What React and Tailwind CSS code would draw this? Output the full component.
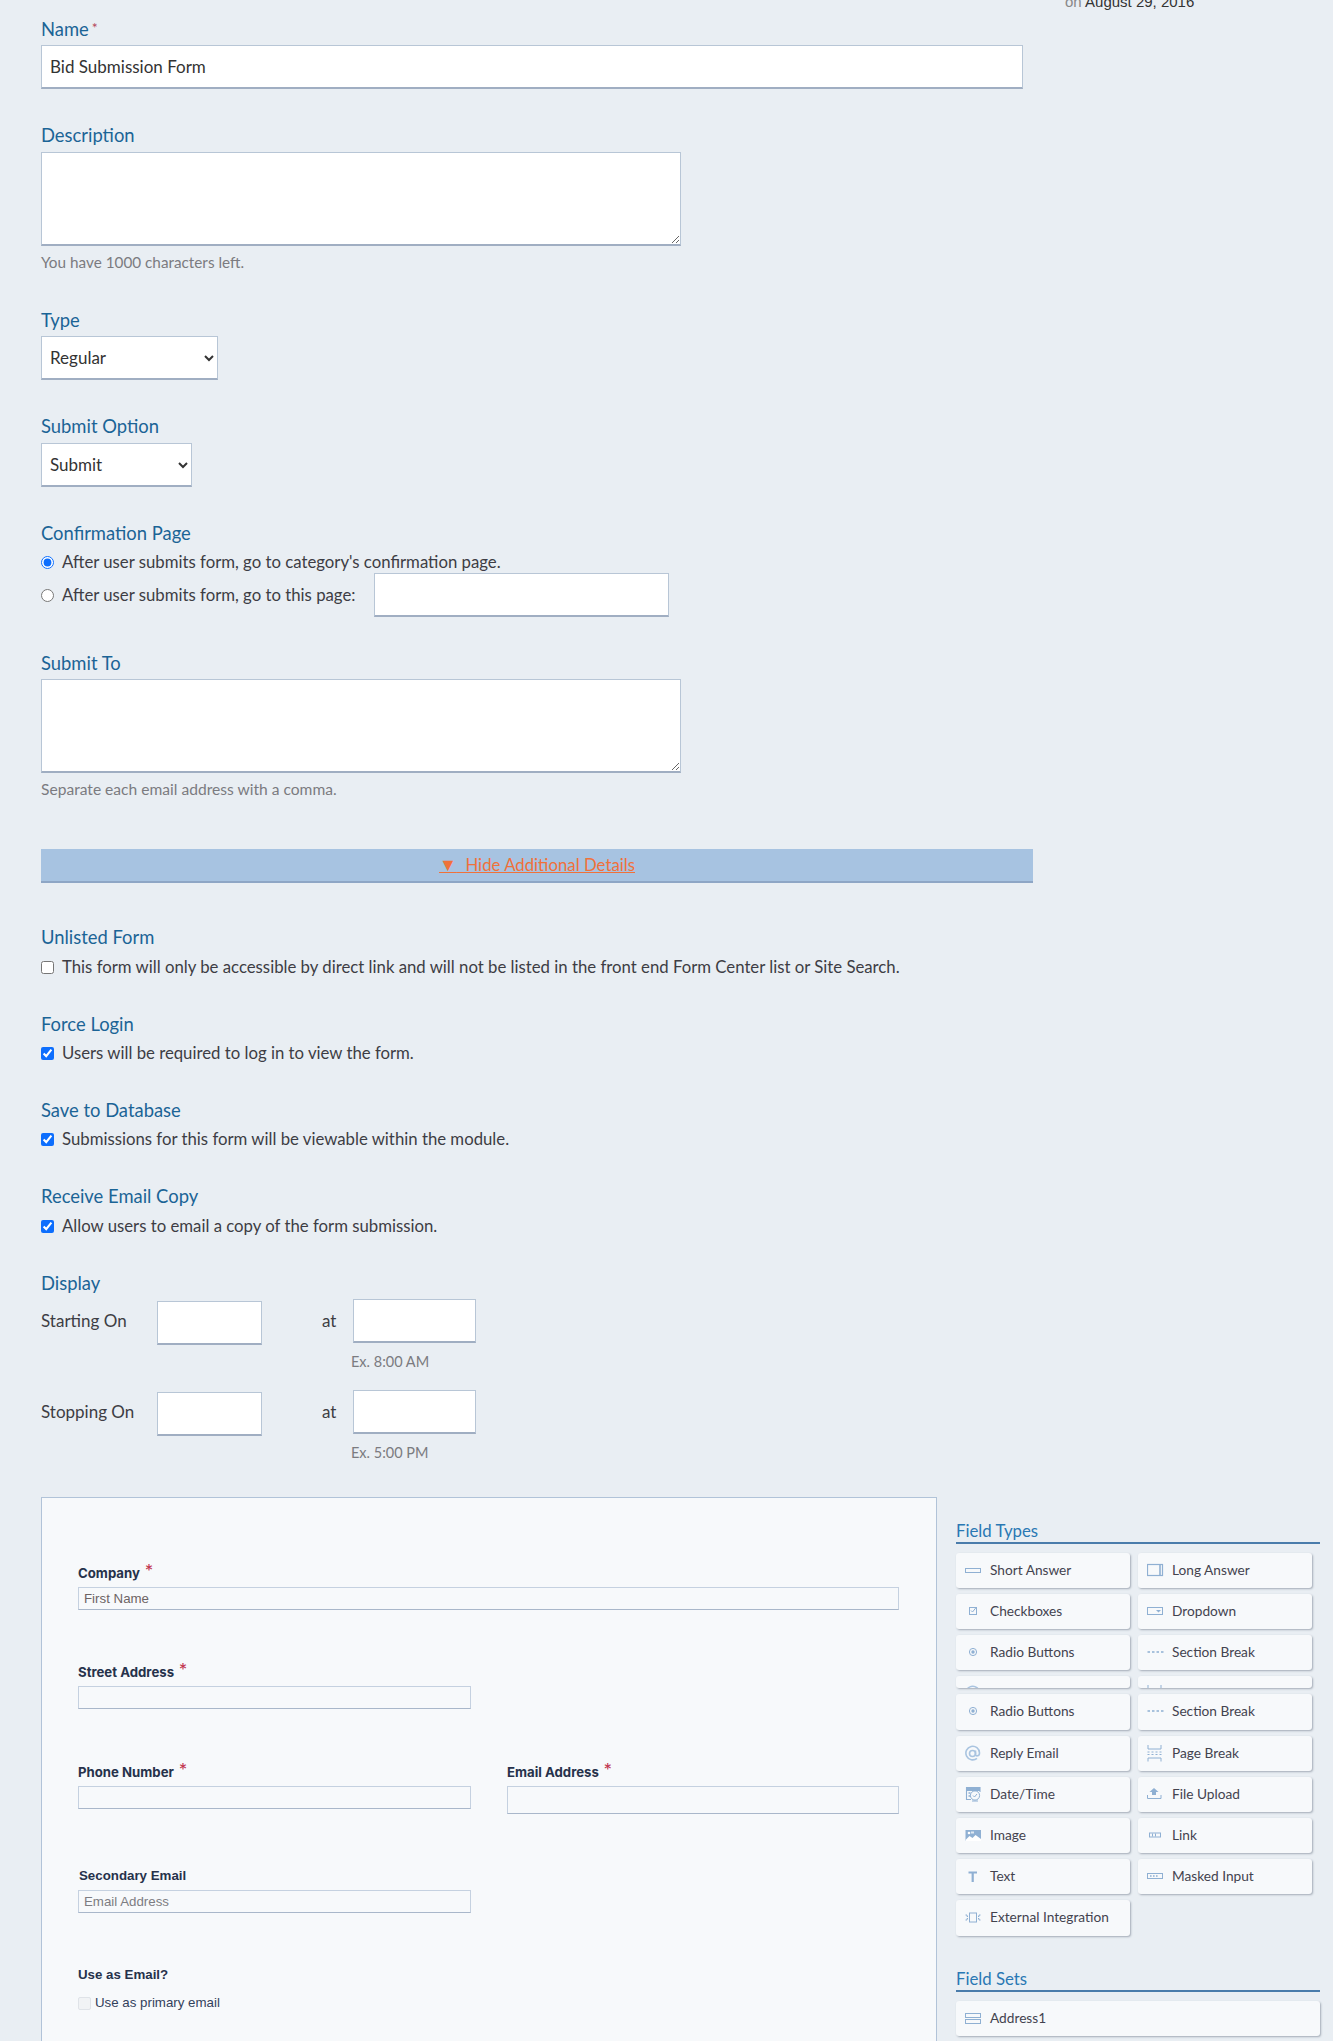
import React from "react";

const BODY = "font-['Lato','Noto_Sans',sans-serif]";
const ICON = "#8fb0d3";

function Label({ children, className = "" }) {
  return <div className={`h-6 text-[18.4px] leading-6 text-[#1b6496] ${className}`}>{children}</div>;
}
const inputCls = "block h-11 bg-white border border-[#b8c6d6] border-b-[#a0aec2] border-b-2 rounded-none";

function Help({ children, className = "" }) {
  return <div className={`text-[15.3px] leading-5 text-[#7b7b80] ${className}`}>{children}</div>;
}

function Check({ children, checked }) {
  return (
    <label className="flex h-6 items-center text-[#3d3d44] text-[16.75px]">
      <input type="checkbox" readOnly checked={checked} className="w-[13px] h-[13px] m-0 mr-[8px] accent-[#0d6efd]" />
      <span>{children}</span>
    </label>
  );
}

function Sel({ w, value }) {
  return (
    <select defaultValue={value} className={`${inputCls} px-[4px] text-[17px] text-[#333] ${w}`}>
      <option>{value}</option>
    </select>
  );
}

const S = { width: 24, height: 24, viewBox: "0 0 24 24", fill: "none", stroke: ICON, strokeWidth: 1 };

const icons = {
  short: <svg {...S}><rect x="0.5" y="9.5" width="15" height="4" /></svg>,
  long: <svg {...S}><rect x="0.5" y="5.5" width="15" height="11" strokeWidth="1.2" /><path d="M13 5.5v11" strokeWidth="1.6" /></svg>,
  check: <svg {...S}><rect x="4.5" y="7.5" width="7" height="7" /><path d="M6 10.5l1.5 1.5L11.5 7" /></svg>,
  drop: <svg {...S}><rect x="0.5" y="7.5" width="15" height="7" /><path d="M9 10h5l-2.5 2.5z" fill={ICON} stroke="none" /></svg>,
  radio: <svg {...S}><circle cx="8" cy="11" r="3.6" /><circle cx="8" cy="11" r="1.7" fill={ICON} stroke="none" /></svg>,
  section: <svg {...S}><path d="M0.5 11h16" strokeWidth="1.4" strokeDasharray="2.5 2" /></svg>,
  at: <svg {...S} stroke="#a9c4e0"><circle cx="7.5" cy="11.5" r="3" strokeWidth="1.6" /><path d="M10.5 8.5v4c0 2 4 2 4-1.5a6.8 6.8 0 1 0-2.5 5.3" strokeWidth="1.6" /></svg>,
  page: <svg {...S}><path d="M1 3v4h13V3M1 19.5v-3.5h13v3.5" /><path d="M0.5 10h14.5M0.5 12.5h14.5" strokeDasharray="2 2" /></svg>,
  date: <svg {...S}><path d="M15 9V4.5H1.5v12H6" strokeWidth="1.1" /><path d="M1.5 6.5h13.5" strokeWidth="3" /><circle cx="10" cy="12.5" r="4.6" /><path d="M8 12.5l1.5 1.5 2.5-3M7 18h6" /><path d="M3.5 10h2M3.5 13h2" strokeWidth="1.4" /></svg>,
  upload: <svg {...S}><path d="M7 5l4.5 4H9v3H5V9H2.5z" fill={ICON} stroke="none" /><path d="M0.5 12v3.5h13.5V12" /></svg>,
  image: <svg {...S}><rect x="0.5" y="6" width="15.5" height="11" fill={ICON} stroke="none" /><path d="M0.5 16l4-4 3 2 3-3 5.5 4v2H.5z" fill="#ffffff" stroke="none" /><circle cx="4" cy="9" r="1.3" fill="#ffffff" stroke="none" /><rect x="6" y="7.5" width="3" height="2" fill="#dfe8f2" stroke="none" /></svg>,
  link: <svg {...S}><rect x="2.5" y="9" width="11" height="4" /><path d="M5.5 9.5v3M8.5 9.5v3" /></svg>,
  text: <svg {...S}><path d="M3.5 7.5h8.5M7.7 7.5V17" strokeWidth="2.2" /></svg>,
  masked: <svg {...S}><rect x="0.5" y="8.5" width="15" height="5" /><path d="M3 11h1.6M6 11h1.6M9 11h1.6" strokeWidth="1.6" /></svg>,
  ext: <svg {...S}><rect x="4.5" y="7" width="7" height="9" /><path d="M0.5 9h1.5v1.5h1M0.5 14h1.5v-1.5h1M15.5 9H14v1.5h-1M15.5 14H14v-1.5h-1" /></svg>,
  set: <svg {...S}><rect x="0.5" y="6.5" width="15" height="4" /><rect x="0.5" y="12.5" width="15" height="4" /></svg>,
};

function Card({ icon, label, clip, tall, wide }) {
  return (
    <div className={`flex items-start ${wide ? "w-[364px]" : "w-[174px]"} ${clip ? "h-3 overflow-hidden" : tall ? "h-9" : "h-[35px]"} bg-[#f7f9fb] rounded-[3px] shadow-[1px_1px_2px_rgba(80,90,110,0.45)] pl-[9px]`}>
      <span className="w-[25px] pt-[6px] shrink-0">{icons[icon]}</span>
      <span className="text-[13.7px] leading-[34px] text-[#43434f]">{label}</span>
    </div>
  );
}

function Row({ a, b, clip, tall }) {
  return (
    <div className="flex gap-2 mb-[6px]">
      <Card {...a} clip={clip} tall={tall} />
      {b ? <Card {...b} clip={clip} tall={tall} /> : null}
    </div>
  );
}

function Req() {
  return <span className="relative -top-[2px] ml-[5px] text-[#c0334d] font-normal text-[16px] leading-none">*</span>;
}

function BLabel({ children, req, className = "" }) {
  return <div className={`h-5 leading-5 text-[13.2px] font-bold text-[#26324b] font-['Inter',sans-serif] ${className}`}>{children}{req ? <Req /> : null}</div>;
}

const bInput = "block h-[23px] bg-transparent border border-[#c5d1e0] border-b-[#a9b7ca] text-[13.3px] px-[5px] leading-[21px] font-['Liberation_Sans',sans-serif]";

export default function App() {
  return (
    <div className={`h-[2041px] overflow-hidden bg-[#e9eef3] ${BODY} relative`}>
      <div className="flex">
        <main className="w-[1033px] pl-[41px] pt-[17px] shrink-0">
          <Label>Name<span className="relative -top-[3px] ml-[3px] text-[14px] text-[#b4475b]">*</span></Label>
          <div className={`${inputCls} mt-1 w-[982px] flex items-center pl-[8px] text-[#333] text-[17px]`}>Bid Submission Form</div>

          <Label className="mt-[34px]">Description</Label>
          <textarea readOnly className={`${inputCls} mt-[5px] !h-[94px] w-[640px] resize`} />
          <Help className="mt-[6px]">You have 1000 characters left.</Help>

          <Label className="mt-[36px]">Type</Label>
          <div className="mt-1"><Sel w="w-[177px]" value="Regular" /></div>

          <Label className="mt-[34px]">Submit Option</Label>
          <div className="mt-[5px]"><Sel w="w-[151px]" value="Submit" /></div>

          <Label className="mt-[34px]">Confirmation Page</Label>
          <label className="flex h-6 mt-[5px] items-center text-[#3d3d44] text-[16.75px]">
            <input type="radio" name="c" readOnly checked className="w-[13px] h-[13px] m-0 mr-[8px] accent-[#0d6efd]" />
            After user submits form, go to category's confirmation page.
          </label>
          <div className="flex h-11 mt-[-1px] items-center text-[#3d3d44] text-[16.75px]">
            <input type="radio" name="c" readOnly className="w-[13px] h-[13px] m-0 mr-[8px]" />
            <span className="w-[312px]">After user submits form, go to this page:</span>
            <div className={`${inputCls} w-[295px]`} />
          </div>

          <Label className="mt-[34px]">Submit To</Label>
          <textarea readOnly className={`${inputCls} mt-1 !h-[94px] w-[640px] resize`} />
          <Help className="mt-[6px] !text-[15.6px]">Separate each email address with a comma.</Help>

          <div className="mt-[50px] h-[34px] w-[992px] bg-[#a7c3e1] border-b-2 border-[#8ea6c5] flex items-center justify-center text-[16.8px] text-[#f0713a] underline">
            <span><span className="text-[18px] leading-none">▼</span>&nbsp;&nbsp;Hide Additional Details</span>
          </div>

          <Label className="mt-[42px]">Unlisted Form</Label>
          <div className="mt-[6px]"><Check>This form will only be accessible by direct link and will not be listed in the front end Form Center list or Site Search.</Check></div>

          <Label className="mt-[33px]">Force Login</Label>
          <div className="mt-[5px]"><Check checked>Users will be required to log in to view the form.</Check></div>

          <Label className="mt-[33px]">Save to Database</Label>
          <div className="mt-[5px]"><Check checked>Submissions for this form will be viewable within the module.</Check></div>

          <Label className="mt-[33px]">Receive Email Copy</Label>
          <div className="mt-[6px]"><Check checked>Allow users to email a copy of the form submission.</Check></div>

          <Label className="mt-[33px]">Display</Label>
          <div className="flex mt-[4px] text-[17px] text-[#3d3d44]">
            <span className="w-[116px] mt-[10px] leading-6">Starting On</span>
            <div className={`${inputCls} w-[105px] mt-[2px]`} />
            <span className="ml-[60px] w-[31px] mt-[10px] leading-6">at</span>
            <div>
              <div className={`${inputCls} w-[123px]`} />
              <Help className="mt-[9px] -ml-[2px] !text-[14.5px]">Ex. 8:00 AM</Help>
            </div>
          </div>
          <div className="flex mt-[18px] text-[17px] text-[#3d3d44]">
            <span className="w-[116px] mt-[10px] leading-6">Stopping On</span>
            <div className={`${inputCls} w-[105px] mt-[2px]`} />
            <span className="ml-[60px] w-[31px] mt-[10px] leading-6">at</span>
            <div>
              <div className={`${inputCls} w-[123px]`} />
              <Help className="mt-[9px] -ml-[2px] !text-[14.5px]">Ex. 5:00 PM</Help>
            </div>
          </div>
        </main>
        <div className="-mt-[8px] ml-[32px] text-[15px] leading-5 whitespace-nowrap font-['Liberation_Sans',sans-serif] text-[#333]"><span className="text-[#888]">on </span>August 29, 2016</div>
      </div>

      <div className="flex pl-[41px] mt-[34px]">
        <section className="w-[896px] h-[700px] shrink-0 bg-[#f7f9fb] border border-[#b1c3d8] pl-[36px] pt-[65px]">
          <BLabel req>Company</BLabel>
          <div className={`${bInput} mt-[4px] w-[821px] text-[#6d6464]`}>First Name</div>

          <BLabel req className="mt-[52px]">Street Address</BLabel>
          <div className={`${bInput} mt-[4px] w-[393px]`} />

          <div className="flex mt-[53px]">
            <div className="w-[429px]">
              <BLabel req>Phone Number</BLabel>
              <div className={`${bInput} mt-[4px] w-[393px]`} />
            </div>
            <div>
              <BLabel req>Email Address</BLabel>
              <div className={`${bInput} mt-[4px] w-[392px] !h-[28px]`} />
            </div>
          </div>

          <BLabel className="mt-[52px] ml-[1px] !font-['Liberation_Sans',sans-serif] !text-[13.3px] text-[#3a2a3c]">Secondary Email</BLabel>
          <div className={`${bInput} mt-[4px] w-[393px] text-[#7d7d82]`}>Email Address</div>

          <BLabel className="mt-[52px] !font-['Liberation_Sans',sans-serif] !text-[13.3px] text-[#3a2a3c]">Use as Email?</BLabel>
          <label className="flex items-center mt-[8px] h-5 text-[13.3px] text-[#33415c] font-['Liberation_Sans',sans-serif]">
            <span className="w-[13px] h-[13px] mr-[4px] border border-[#dfe3e8] rounded-[2px] bg-[#f1f3f5]" />
            Use as primary email
          </label>
        </section>

        <aside className="ml-[19px] pt-[25px]">
          <div className="w-[364px] h-5 border-b-2 border-[#4a7cab] box-content text-[16.8px] leading-[18px] text-[#2a78b4]">Field Types</div>
          <div className="mt-[9px]">
            <Row a={{ icon: "short", label: "Short Answer" }} b={{ icon: "long", label: "Long Answer" }} />
            <Row a={{ icon: "check", label: "Checkboxes" }} b={{ icon: "drop", label: "Dropdown" }} />
            <Row a={{ icon: "radio", label: "Radio Buttons" }} b={{ icon: "section", label: "Section Break" }} />
            <Row clip a={{ icon: "at", label: "Reply Email" }} b={{ icon: "page", label: "Page Break" }} />
            <Row tall a={{ icon: "radio", label: "Radio Buttons" }} b={{ icon: "section", label: "Section Break" }} />
            <Row a={{ icon: "at", label: "Reply Email" }} b={{ icon: "page", label: "Page Break" }} />
            <Row a={{ icon: "date", label: "Date/Time" }} b={{ icon: "upload", label: "File Upload" }} />
            <Row a={{ icon: "image", label: "Image" }} b={{ icon: "link", label: "Link" }} />
            <Row a={{ icon: "text", label: "Text" }} b={{ icon: "masked", label: "Masked Input" }} />
            <Row tall a={{ icon: "ext", label: "External Integration" }} />
          </div>
          <div className="mt-[34px] w-[364px] h-5 border-b-2 border-[#4a7cab] box-content text-[16.8px] leading-[18px] text-[#2a78b4]">Field Sets</div>
          <div className="mt-[9px]">
            <Card wide icon="set" label="Address1" />
          </div>
        </aside>
      </div>
    </div>
  );
}
